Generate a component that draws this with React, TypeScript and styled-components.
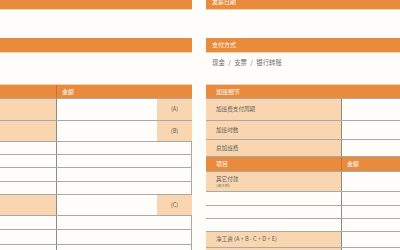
import React from 'react';
import styled, { createGlobalStyle } from 'styled-components';

const ORANGE = '#e98b3d';
const PEACH = '#f9d6af';
const LINE = '#a9a9a9';
const DIVIDER = '#8a8a8a';

const GlobalStyle = createGlobalStyle`
  html, body {
    margin: 0;
    padding: 0;
    background: #fffdfa;
    overflow: hidden;
  }
  body {
    font-family: "Noto Sans CJK SC", "Noto Sans", sans-serif;
  }
`;

const Page = styled.div`
  display: flex;
  align-items: flex-start;
  gap: 14px;
  width: 400px;
  height: 250px;
  overflow: hidden;
`;

const Column = styled.div<{ $width: number }>`
  display: flex;
  flex-direction: column;
  flex: 0 0 ${p => p.$width}px;
  width: ${p => p.$width}px;

  & > * {
    flex-shrink: 0;
  }
`;

const SectionBar = styled.div<{ $first?: boolean }>`
  height: 14px;
  margin-top: ${p => (p.$first ? '-5px' : '0')};
  background: ${ORANGE};
  color: #fff;
  font-size: 6px;
  line-height: 14px;
  padding-left: 6px;
  box-shadow: 0 1px 0 #f7cfa8;
`;

const Gap = styled.div<{ $h: number }>`
  height: ${p => p.$h}px;
`;

const Methods = styled.div`
  height: 33px;
  box-sizing: border-box;
  padding: 6px 0 0 6px;
  font-size: 6.4px;
  line-height: 10px;
  color: #6b6b6b;
  word-spacing: 2px;
  white-space: pre;
`;

const Table = styled.div`
  display: flex;
  flex-direction: column;
  box-shadow: 0 -1px 0 #f7cfa8;

  & > * {
    flex-shrink: 0;
  }
`;

const Row = styled.div<{ $cols: string; $h: number; $edge?: boolean }>`
  display: grid;
  grid-template-columns: ${p => p.$cols};
  height: ${p => p.$h}px;
  box-sizing: border-box;
  border-bottom: 1px solid ${LINE};
  border-right: ${p => (p.$edge ? `1px solid ${LINE}` : 'none')};
`;

type Tone = 'orange' | 'peach' | 'white';

const toneBg: Record<Tone, string> = {
  orange: ORANGE,
  peach: PEACH,
  white: '#fffdfa',
};

const Cell = styled.div<{ $tone: Tone; $divide?: boolean; $center?: boolean; $top?: boolean }>`
  background: ${p => toneBg[p.$tone]};
  color: ${p => (p.$tone === 'orange' ? '#fff' : '#5f5f5f')};
  font-size: ${p => (p.$tone === 'orange' ? '6px' : '5.6px')};
  display: flex;
  flex-direction: column;
  justify-content: ${p => (p.$top ? 'flex-start' : 'center')};
  align-items: ${p => (p.$center ? 'center' : 'flex-start')};
  padding: ${p => (p.$top ? '4px 0 0 10px' : p.$center ? '0' : '0 0 0 10px')};
  box-sizing: border-box;
  border-right: ${p => (p.$divide ? `1px solid ${p.$tone === 'orange' ? '#c9722e' : DIVIDER}` : 'none')};
  line-height: 1.2;
  white-space: nowrap;
`;

const LeftHeadCell = styled(Cell)`
  padding-left: 5px;
`;

const Note = styled.span`
  font-size: 3.8px;
  color: #7a7a7a;
  margin-top: 1px;
`;

const leftPlain = [13, 13, 14, 13];
const leftTail = [14, 15, 15];
const rightPlain = [14, 13, 13];

const LEFT_COLS = '57px 100px 1fr';
const LEFT_WIDE = '57px 1fr';
const RIGHT_COLS = '136px 1fr';

const LeftTable: React.FC = () => (
  <Table>
    <Row $cols={LEFT_WIDE} $h={14}>
      <Cell $tone="orange" $divide />
      <LeftHeadCell $tone="orange">金额</LeftHeadCell>
    </Row>
    <Row $cols={LEFT_COLS} $h={22}>
      <Cell $tone="peach" $divide />
      <Cell $tone="white" />
      <Cell $tone="peach" $center>(A)</Cell>
    </Row>
    <Row $cols={LEFT_COLS} $h={21}>
      <Cell $tone="peach" $divide />
      <Cell $tone="white" />
      <Cell $tone="peach" $center>(B)</Cell>
    </Row>
    {leftPlain.map((h, i) => (
      <Row key={`p${i}`} $cols={LEFT_WIDE} $h={h} $edge>
        <Cell $tone="white" $divide />
        <Cell $tone="white" />
      </Row>
    ))}
    <Row $cols={LEFT_COLS} $h={21}>
      <Cell $tone="peach" $divide />
      <Cell $tone="white" />
      <Cell $tone="peach" $center>(C)</Cell>
    </Row>
    {leftTail.map((h, i) => (
      <Row key={`t${i}`} $cols={LEFT_WIDE} $h={h} $edge>
        <Cell $tone="white" $divide />
        <Cell $tone="white" />
      </Row>
    ))}
  </Table>
);

const RightTable: React.FC = () => (
  <Table>
    <Row $cols="1fr" $h={14}>
      <Cell $tone="orange">加班细节</Cell>
    </Row>
    <Row $cols={RIGHT_COLS} $h={22}>
      <Cell $tone="peach" $divide>加班费支付周期</Cell>
      <Cell $tone="white" />
    </Row>
    <Row $cols={RIGHT_COLS} $h={19}>
      <Cell $tone="peach" $divide>加班时数</Cell>
      <Cell $tone="white" />
    </Row>
    <Row $cols={RIGHT_COLS} $h={17}>
      <Cell $tone="peach" $divide>总加班费</Cell>
      <Cell $tone="white" />
    </Row>
    <Row $cols={RIGHT_COLS} $h={15}>
      <Cell $tone="orange" $divide>项目</Cell>
      <LeftHeadCell $tone="orange">金额</LeftHeadCell>
    </Row>
    <Row $cols={RIGHT_COLS} $h={20}>
      <Cell $tone="peach" $divide $top>
        其它付款
        <Note>(请注明)</Note>
      </Cell>
      <Cell $tone="white" />
    </Row>
    {rightPlain.map((h, i) => (
      <Row key={`r${i}`} $cols={RIGHT_COLS} $h={h}>
        <Cell $tone="white" $divide />
        <Cell $tone="white" />
      </Row>
    ))}
    <Row $cols={RIGHT_COLS} $h={16}>
      <Cell $tone="peach" $divide>净工资 (A + B - C + D + E)</Cell>
      <Cell $tone="white" />
    </Row>
    <Row $cols={RIGHT_COLS} $h={16}>
      <Cell $tone="peach" $divide />
      <Cell $tone="white" />
    </Row>
  </Table>
);

const App: React.FC = () => (
  <>
    <GlobalStyle />
    <Page>
      <Column $width={192}>
        <SectionBar $first />
        <Gap $h={29} />
        <SectionBar />
        <Gap $h={33} />
        <LeftTable />
      </Column>
      <Column $width={200}>
        <SectionBar $first>发薪日期</SectionBar>
        <Gap $h={29} />
        <SectionBar>支付方式</SectionBar>
        <Methods>现金 / 支票 / 银行转账</Methods>
        <RightTable />
      </Column>
    </Page>
  </>
);

export default App;
